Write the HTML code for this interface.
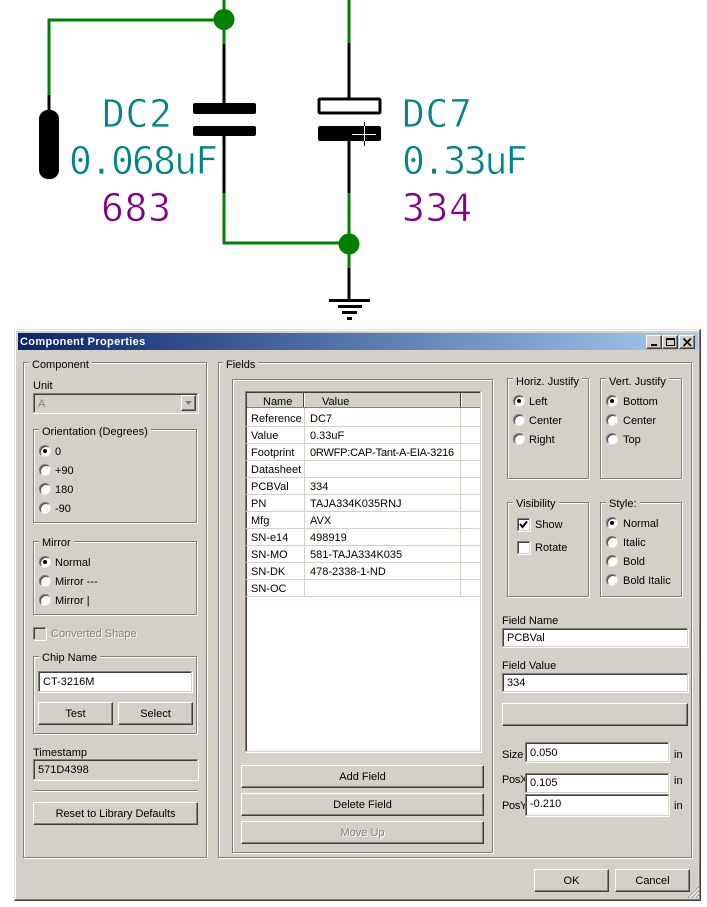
<!DOCTYPE html>
<html><head><meta charset="utf-8"><style>
html,body{margin:0;padding:0;background:#fff}
body{position:relative;width:707px;height:907px;overflow:hidden;font:11px/14px "Liberation Sans",sans-serif;color:#000}
div,span{position:absolute;box-sizing:border-box}
.t{white-space:nowrap;height:14px;margin-top:1px}
.dlg{left:14px;top:329px;width:687px;height:572px;background:#d4d0c8;border:1px solid;border-color:#e6e3dd #404040 #404040 #e6e3dd;box-shadow:inset -1px -1px 0 #808080,inset 1px 1px 0 #fff}
.title{left:18px;top:333px;width:680px;height:17px;background:linear-gradient(90deg,#0a246a,#a6caf0)}
.g{border:1px solid #808080;box-shadow:1px 1px 0 #fff,inset 1px 1px 0 #fff}
.l{background:#d4d0c8;padding:0 3px;white-space:nowrap;height:14px;margin-top:1px}
.in{background:#fff;border:1px solid;border-color:#808080 #d4d0c8 #d4d0c8 #808080;box-shadow:inset 1px 1px 0 #404040,1px 1px 0 #fff;line-height:19px;padding-left:4px;white-space:nowrap}
.b{background:#d4d0c8;border:1px solid;border-color:#fff #404040 #404040 #fff;box-shadow:inset -1px -1px 0 #808080;text-align:center;line-height:22px;white-space:nowrap}
.r{width:12px;height:12px;border-radius:50%;background:#fff;border:1px solid;border-color:#777 #e8e6e0 #e8e6e0 #777;box-shadow:inset 1px 1px 0 #444}
.r.s::after{content:"";position:absolute;left:3px;top:3px;width:4px;height:4px;border-radius:50%;background:#000}
.c{width:13px;height:13px;background:#fff;border:1px solid;border-color:#808080 #d4d0c8 #d4d0c8 #808080;box-shadow:inset 1px 1px 0 #404040,1px 1px 0 #fff}
.rowl{left:246px;width:234px;height:1px;background:#d4d0c8}
.wb{top:335px;width:16px;height:14px;background:#d4d0c8;border:1px solid;border-color:#fff #404040 #404040 #fff;box-shadow:inset -1px -1px 0 #808080}
.dis{color:#808080;text-shadow:1px 1px 0 #fff}
svg{position:absolute;left:0;top:0}
</style></head><body>
<svg width="707" height="330" style="font-family:'DejaVu Sans Mono',monospace;font-size:38px">
<g fill="none" stroke-width="3">
<path d="M224 0V44M49 95V20H224M224 193V243H349M349 0V43M349 193V268" stroke="#008000"/>
<path d="M224 44V103M224 136V193M349 43V98M349 141V193M349 268V300M49 95V112" stroke="#000"/>
</g>
<circle cx="224" cy="19.500" r="10.500" fill="#008000"/><circle cx="349" cy="244" r="10.500" fill="#008000"/>
<rect x="39" y="110" width="20" height="69" rx="9" fill="#000"/>
<rect x="193" y="103" width="63" height="11" rx="2" fill="#000"/>
<rect x="193" y="126" width="63" height="10" rx="2" fill="#000"/>
<rect x="319" y="99" width="61" height="14" rx="1" fill="#fff" stroke="#000" stroke-width="3"/>
<rect x="318" y="126" width="63" height="15" rx="2" fill="#000"/>
<path d="M352 134.500H376M364.500 126V141" stroke="#fff" stroke-width="1"/>
<path d="M364.500 122V126M364.500 141V146" stroke="#000" stroke-width="1"/>
<path d="M329 300.500H370M338 306.500H362M342 312.500H357M347 318.500H352" stroke="#000" stroke-width="3"/>
<g fill="#008484" stroke="#fff" stroke-width="0.700">
<text x="102" y="127" textLength="70">DC2</text>
<text x="69" y="174" textLength="149">0.068uF</text>
<text x="402" y="127" textLength="70">DC7</text>
<text x="402" y="174" textLength="126">0.33uF</text>
</g>
<g fill="#840084" stroke="#fff" stroke-width="0.700">
<text x="101" y="221" textLength="70">683</text>
<text x="402" y="221" textLength="70">334</text>
</g>
</svg>

<div class="dlg"></div>
<div class="title"></div>
<div class="t" style="left:20px;top:334px;color:#fff;font-weight:bold;letter-spacing:.35px">Component Properties</div>
<div class="wb" style="left:646px"><span style="left:4px;top:8px;width:6px;height:2px;background:#000"></span></div>
<div class="wb" style="left:662px"><span style="left:3px;top:2px;width:9px;height:8px;border:1px solid #000;border-top-width:2px"></span></div>
<div class="wb" style="left:679px"><svg width="14" height="12"><path d="M3.500 2.500L11 10M11 2.500L3.500 10" stroke="#000" stroke-width="1.600"/></svg></div>

<!-- Component -->
<div class="g" style="left:23px;top:362px;width:184px;height:496px"></div>
<div class="l" style="left:29px;top:357px">Component</div>
<div class="t" style="left:33px;top:378px">Unit</div>
<div class="in" style="left:33px;top:393px;width:165px;height:20px;background:#d4d0c8;color:#808080;line-height:20px">A</div>
<div class="b" style="left:181px;top:395px;width:15px;height:16px"><svg width="13" height="14"><path d="M3 5H10L6.500 9Z" fill="#808080"/></svg></div>
<div class="g" style="left:33px;top:429px;width:164px;height:94px"></div>
<div class="l" style="left:39px;top:424px">Orientation (Degrees)</div>
<div class="r s" style="left:39px;top:445px"></div><div class="t" style="left:55px;top:444px">0</div>
<div class="r" style="left:39px;top:464px"></div><div class="t" style="left:55px;top:463px">+90</div>
<div class="r" style="left:39px;top:483px"></div><div class="t" style="left:55px;top:482px">180</div>
<div class="r" style="left:39px;top:502px"></div><div class="t" style="left:55px;top:501px">-90</div>
<div class="g" style="left:33px;top:541px;width:164px;height:74px"></div>
<div class="l" style="left:39px;top:535px">Mirror</div>
<div class="r s" style="left:39px;top:556px"></div><div class="t" style="left:55px;top:555px">Normal</div>
<div class="r" style="left:39px;top:575px"></div><div class="t" style="left:55px;top:574px">Mirror ---</div>
<div class="r" style="left:39px;top:594px"></div><div class="t" style="left:55px;top:593px">Mirror |</div>
<div class="c" style="left:33px;top:627px;background:#d4d0c8"></div>
<div class="t dis" style="left:51px;top:626px">Converted Shape</div>
<div class="g" style="left:33px;top:656px;width:164px;height:78px"></div>
<div class="l" style="left:39px;top:650px">Chip Name</div>
<div class="in" style="left:38px;top:671px;width:154px;height:21px;line-height:20px">CT-3216M</div>
<div class="b" style="left:38px;top:702px;width:75px;height:23px">Test</div>
<div class="b" style="left:118px;top:702px;width:75px;height:23px">Select</div>
<div class="t" style="left:33px;top:745px">Timestamp</div>
<div class="in" style="left:33px;top:759px;width:165px;height:21px;background:#d4d0c8;line-height:20px">571D4398</div>
<div style="left:33px;top:790px;width:165px;height:1px;background:#808080;box-shadow:0 1px 0 #fff"></div>
<div class="b" style="left:33px;top:802px;width:165px;height:23px;letter-spacing:-.05px">Reset to Library Defaults</div>

<!-- Fields -->
<div class="g" style="left:218px;top:362px;width:474px;height:496px"></div>
<div class="l" style="left:223px;top:357px">Fields</div>
<div class="g" style="left:232px;top:379px;width:261px;height:474px"></div>
<div class="in" style="left:245px;top:391px;width:236px;height:361px"></div>
<div style="left:247px;top:393px;width:233px;height:15px;background:#d4d0c8"></div>
<div style="left:303px;top:393px;width:1px;height:15px;background:#404040;box-shadow:1px 0 0 #fff"></div>
<div style="left:460px;top:393px;width:1px;height:15px;background:#404040;box-shadow:1px 0 0 #fff"></div>
<div style="left:247px;top:407px;width:233px;height:1px;background:#808080"></div>
<div class="t" style="left:263px;top:394px">Name</div>
<div class="t" style="left:322px;top:394px">Value</div>
<div style="left:304px;top:408px;width:1px;height:188px;background:#d4d0c8"></div>
<div style="left:460px;top:408px;width:1px;height:188px;background:#d4d0c8"></div>
<div class="rowl" style="top:426px"></div><div class="rowl" style="top:443px"></div><div class="rowl" style="top:460px"></div>
<div class="rowl" style="top:477px"></div><div class="rowl" style="top:494px"></div><div class="rowl" style="top:511px"></div>
<div class="rowl" style="top:528px"></div><div class="rowl" style="top:545px"></div><div class="rowl" style="top:562px"></div>
<div class="rowl" style="top:579px"></div><div class="rowl" style="top:596px"></div>
<div class="t" style="left:251px;top:411px">Reference</div><div class="t" style="left:310px;top:411px">DC7</div>
<div class="t" style="left:251px;top:428px">Value</div><div class="t" style="left:310px;top:428px">0.33uF</div>
<div class="t" style="left:251px;top:445px">Footprint</div><div class="t" style="left:310px;top:445px;letter-spacing:-.2px">0RWFP:CAP-Tant-A-EIA-3216</div>
<div class="t" style="left:251px;top:462px">Datasheet</div>
<div class="t" style="left:251px;top:479px">PCBVal</div><div class="t" style="left:310px;top:479px">334</div>
<div class="t" style="left:251px;top:496px">PN</div><div class="t" style="left:310px;top:496px">TAJA334K035RNJ</div>
<div class="t" style="left:251px;top:513px">Mfg</div><div class="t" style="left:310px;top:513px">AVX</div>
<div class="t" style="left:251px;top:530px">SN-e14</div><div class="t" style="left:310px;top:530px">498919</div>
<div class="t" style="left:251px;top:547px">SN-MO</div><div class="t" style="left:310px;top:547px">581-TAJA334K035</div>
<div class="t" style="left:251px;top:564px">SN-DK</div><div class="t" style="left:310px;top:564px">478-2338-1-ND</div>
<div class="t" style="left:251px;top:581px">SN-OC</div>
<div class="b" style="left:241px;top:765px;width:243px;height:23px">Add Field</div>
<div class="b" style="left:241px;top:793px;width:243px;height:23px">Delete Field</div>
<div class="b dis" style="left:241px;top:821px;width:243px;height:23px">Move Up</div>

<!-- Right -->
<div class="g" style="left:507px;top:378px;width:82px;height:101px"></div>
<div class="l" style="left:513px;top:374px">Horiz. Justify</div>
<div class="r s" style="left:513px;top:395px"></div><div class="t" style="left:529px;top:394px">Left</div>
<div class="r" style="left:513px;top:414px"></div><div class="t" style="left:529px;top:413px">Center</div>
<div class="r" style="left:513px;top:433px"></div><div class="t" style="left:529px;top:432px">Right</div>
<div class="g" style="left:600px;top:378px;width:82px;height:101px"></div>
<div class="l" style="left:606px;top:374px">Vert. Justify</div>
<div class="r s" style="left:606px;top:395px"></div><div class="t" style="left:623px;top:394px">Bottom</div>
<div class="r" style="left:606px;top:414px"></div><div class="t" style="left:623px;top:413px">Center</div>
<div class="r" style="left:606px;top:433px"></div><div class="t" style="left:623px;top:432px">Top</div>
<div class="g" style="left:507px;top:502px;width:82px;height:95px"></div>
<div class="l" style="left:513px;top:496px">Visibility</div>
<div class="c" style="left:517px;top:518px"><svg width="11" height="11"><path d="M2 5L4.500 8L9 2.500" fill="none" stroke="#000" stroke-width="2"/></svg></div>
<div class="t" style="left:535px;top:517px">Show</div>
<div class="c" style="left:517px;top:541px"></div>
<div class="t" style="left:535px;top:540px">Rotate</div>
<div class="g" style="left:600px;top:502px;width:82px;height:95px"></div>
<div class="l" style="left:606px;top:496px">Style:</div>
<div class="r s" style="left:606px;top:517px"></div><div class="t" style="left:623px;top:516px">Normal</div>
<div class="r" style="left:606px;top:536px"></div><div class="t" style="left:623px;top:535px">Italic</div>
<div class="r" style="left:606px;top:555px"></div><div class="t" style="left:623px;top:554px">Bold</div>
<div class="r" style="left:606px;top:574px"></div><div class="t" style="left:623px;top:573px">Bold Italic</div>

<div class="t" style="left:502px;top:613px">Field Name</div>
<div class="in" style="left:502px;top:628px;width:186px;height:19px">PCBVal</div>
<div class="t" style="left:502px;top:658px">Field Value</div>
<div class="in" style="left:502px;top:673px;width:186px;height:19px">334</div>
<div class="b" style="left:502px;top:703px;width:186px;height:23px"></div>
<div class="t" style="left:502px;top:747px">Size</div>
<div class="in" style="left:525px;top:742px;width:144px;height:20px;line-height:20px">0.050</div>
<div class="t" style="left:674px;top:747px">in</div>
<div class="t" style="left:502px;top:772px;letter-spacing:-.3px">PosX</div>
<div class="in" style="left:525px;top:773px;width:144px;height:20px">0.105</div>
<div class="t" style="left:674px;top:773px">in</div>
<div class="t" style="left:502px;top:798px;letter-spacing:-.3px">PosY</div>
<div class="in" style="left:525px;top:794px;width:144px;height:22px">-0.210</div>
<div class="t" style="left:674px;top:798px">in</div>
<div class="b" style="left:534px;top:869px;width:75px;height:23px">OK</div>
<div class="b" style="left:615px;top:869px;width:75px;height:23px">Cancel</div>
<svg style="left:686px;top:885px" width="14" height="14"><path d="M13 2L2 13M13 6L6 13M13 10L10 13" stroke="#808080" fill="none"/><path d="M13 3L3 13M13 7L7 13M13 11L11 13" stroke="#fff" fill="none"/></svg>
</body></html>
